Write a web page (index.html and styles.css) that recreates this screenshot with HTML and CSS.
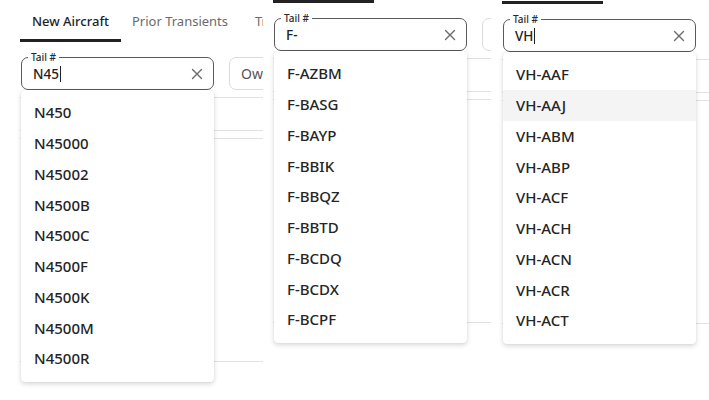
FILE: index.html
```html
<!DOCTYPE html>
<html lang="en">
<head>
<meta charset="utf-8">
<title>Tail # autocomplete</title>
<link rel="stylesheet" href="styles.css">
</head>
<body>
<div class="collage">

  <!-- Shot 1 -->
  <div class="shot shot--a">
    <div class="page">
      <nav class="tabs">
        <div class="tab tab--active tab--w1">New Aircraft</div>
        <div class="tab tab--w2">Prior Transients</div>
        <div class="tab tab--w3">Transient Log</div>
      </nav>
      <div class="fields">
        <div class="field field--focused">
          <span class="field-label">Tail #</span>
          <span class="field-value">N45<span class="caret"></span></span>
          <svg class="clear" viewBox="0 0 12 12" width="12" height="12"><path d="M1.5 1.5 L10.5 10.5 M10.5 1.5 L1.5 10.5" /></svg>
          <ul class="menu">
            <li class="menu-item">N450</li>
            <li class="menu-item">N45000</li>
            <li class="menu-item">N45002</li>
            <li class="menu-item">N4500B</li>
            <li class="menu-item">N4500C</li>
            <li class="menu-item">N4500F</li>
            <li class="menu-item">N4500K</li>
            <li class="menu-item">N4500M</li>
            <li class="menu-item">N4500R</li>
          </ul>
        </div>
        <div class="field field--idle"><span class="field-value field-value--muted">Owner</span></div>
      </div>
      <div class="rules">
        <div class="rule rule--1"></div>
        <div class="rule rule--2"></div>
        <div class="rule rule--3"></div>
        <div class="rule rule--4"></div>
      </div>
    </div>
  </div>

  <!-- Shot 2 -->
  <div class="shot shot--b">
    <div class="page page--b">
      <nav class="tabs">
        <div class="tab tab--active tab--w1">New Aircraft</div>
        <div class="tab tab--w2">Prior Transients</div>
        <div class="tab tab--w3">Transient Log</div>
      </nav>
      <div class="fields">
        <div class="field field--focused">
          <span class="field-label">Tail #</span>
          <span class="field-value">F-</span>
          <svg class="clear" viewBox="0 0 12 12" width="12" height="12"><path d="M1.5 1.5 L10.5 10.5 M10.5 1.5 L1.5 10.5" /></svg>
          <ul class="menu">
            <li class="menu-item">F-AZBM</li>
            <li class="menu-item">F-BASG</li>
            <li class="menu-item">F-BAYP</li>
            <li class="menu-item">F-BBIK</li>
            <li class="menu-item">F-BBQZ</li>
            <li class="menu-item">F-BBTD</li>
            <li class="menu-item">F-BCDQ</li>
            <li class="menu-item">F-BCDX</li>
            <li class="menu-item">F-BCPF</li>
          </ul>
        </div>
        <div class="field field--idle"><span class="field-value field-value--muted">Owner</span></div>
      </div>
      <div class="rules">
        <div class="rule rule--1"></div>
        <div class="rule rule--2"></div>
        <div class="rule rule--3"></div>
        <div class="rule rule--4"></div>
      </div>
    </div>
  </div>

  <!-- Shot 3 -->
  <div class="shot shot--c">
    <div class="page page--c">
      <nav class="tabs">
        <div class="tab tab--active tab--w1">New Aircraft</div>
        <div class="tab tab--w2">Prior Transients</div>
        <div class="tab tab--w3">Transient Log</div>
      </nav>
      <div class="fields">
        <div class="field field--focused">
          <span class="field-label">Tail #</span>
          <span class="field-value">VH<span class="caret"></span></span>
          <svg class="clear" viewBox="0 0 12 12" width="12" height="12"><path d="M1.5 1.5 L10.5 10.5 M10.5 1.5 L1.5 10.5" /></svg>
          <ul class="menu">
            <li class="menu-item">VH-AAF</li>
            <li class="menu-item menu-item--hover">VH-AAJ</li>
            <li class="menu-item">VH-ABM</li>
            <li class="menu-item">VH-ABP</li>
            <li class="menu-item">VH-ACF</li>
            <li class="menu-item">VH-ACH</li>
            <li class="menu-item">VH-ACN</li>
            <li class="menu-item">VH-ACR</li>
            <li class="menu-item">VH-ACT</li>
          </ul>
        </div>
        <div class="field field--idle"><span class="field-value field-value--muted">Owner</span></div>
      </div>
      <div class="rules">
        <div class="rule rule--1"></div>
        <div class="rule rule--2"></div>
        <div class="rule rule--3"></div>
        <div class="rule rule--4"></div>
      </div>
    </div>
  </div>

</div>
</body>
</html>
```

FILE: styles.css
```css
html, body {
  margin: 0;
  padding: 0;
  background: #ffffff;
}

body {
  font-family: "Noto Sans", "Open Sans", sans-serif;
  color: #222222;
}

.collage {
  display: flex;
  width: 709px;
  height: 400px;
  overflow: hidden;
}

.shot {
  flex: none;
  height: 400px;
  overflow: hidden;
  background: #ffffff;
}

.shot--a { width: 263px; }
.shot--b { width: 228px; }
.shot--c { width: 218px; }

.page {
  width: 760px;
  padding-left: 20px;
  box-sizing: border-box;
}

.page--b { margin: -39px 0 0 -10px; }
.page--c { margin: -38px 0 0 -9px; }

/* Tabs */
.tabs {
  display: flex;
  height: 41px;
}

.tab {
  position: relative;
  flex: none;
  display: flex;
  align-items: center;
  justify-content: center;
  padding: 0 14px;
  font-size: 13px;
  color: #6b6b6b;
  white-space: nowrap;
  box-sizing: border-box;
}

.tab--w1 { width: 101px; padding: 0; }
.tab--w2 { width: 118px; padding: 0; }
.tab--w3 { padding-left: 16px; }

.tab--active {
  color: #1f1f1f;
  font-weight: 500;
}

.tab--active::after {
  content: "";
  position: absolute;
  left: 0;
  right: 0;
  bottom: -1px;
  height: 3px;
  background: #222222;
}

/* Fields */
.fields {
  display: flex;
  gap: 15px;
  margin-top: 16px;
  padding-left: 1px;
}

.field {
  position: relative;
  flex: none;
  width: 193px;
  height: 33px;
  box-sizing: border-box;
  border-radius: 7px;
  display: flex;
  align-items: center;
  padding: 0 10px 0 11px;
}

.field--focused {
  border: 1px solid #5a5a5a;
}

.field--idle {
  border: 1px solid #dcdcdc;
}

.field-label {
  position: absolute;
  top: -7px;
  left: 6px;
  padding: 0 3px;
  background: #ffffff;
  font-size: 10px;
  line-height: 12px;
  color: #2a2a2a;
  font-weight: 500;
}

.field-value {
  flex: 1;
  font-size: 13.5px;
  color: #222222;
  font-weight: 500;
  display: flex;
  align-items: center;
}

.field-value--muted {
  color: #555555;
  font-weight: 400;
  font-size: 14px;
}

.caret {
  display: inline-block;
  width: 1px;
  height: 16px;
  background: #222222;
  margin-left: 1px;
}

.clear {
  flex: none;
  fill: none;
  stroke: #6a6a6a;
  stroke-width: 1.4;
  stroke-linecap: round;
}

/* Dropdown menu */
.menu {
  position: absolute;
  z-index: 2;
  top: calc(100% + 1px);
  left: -1px;
  width: 193px;
  margin: 0;
  padding: 7px 0 8px;
  list-style: none;
  background: #ffffff;
  border-radius: 4px;
  box-shadow: 0 2px 5px rgba(0, 0, 0, 0.16), 0 0 1px rgba(0, 0, 0, 0.12);
}

.menu-item {
  height: 30.75px;
  display: flex;
  align-items: center;
  padding-left: 13px;
  font-size: 15px;
  font-weight: 500;
  color: #252525;
}

.menu-item--hover {
  background: #f4f4f4;
}

/* Table-ish rules beneath */
.rules {
  display: flex;
  flex-direction: column;
}

.rule {
  border-top: 1px solid #e2e2e2;
}

.rule--1 { margin-top: 7px; }
.rule--2 { margin-top: 32px; }
.rule--3 { margin-top: 7px; }
.rule--4 { margin-top: 222px; }
```
